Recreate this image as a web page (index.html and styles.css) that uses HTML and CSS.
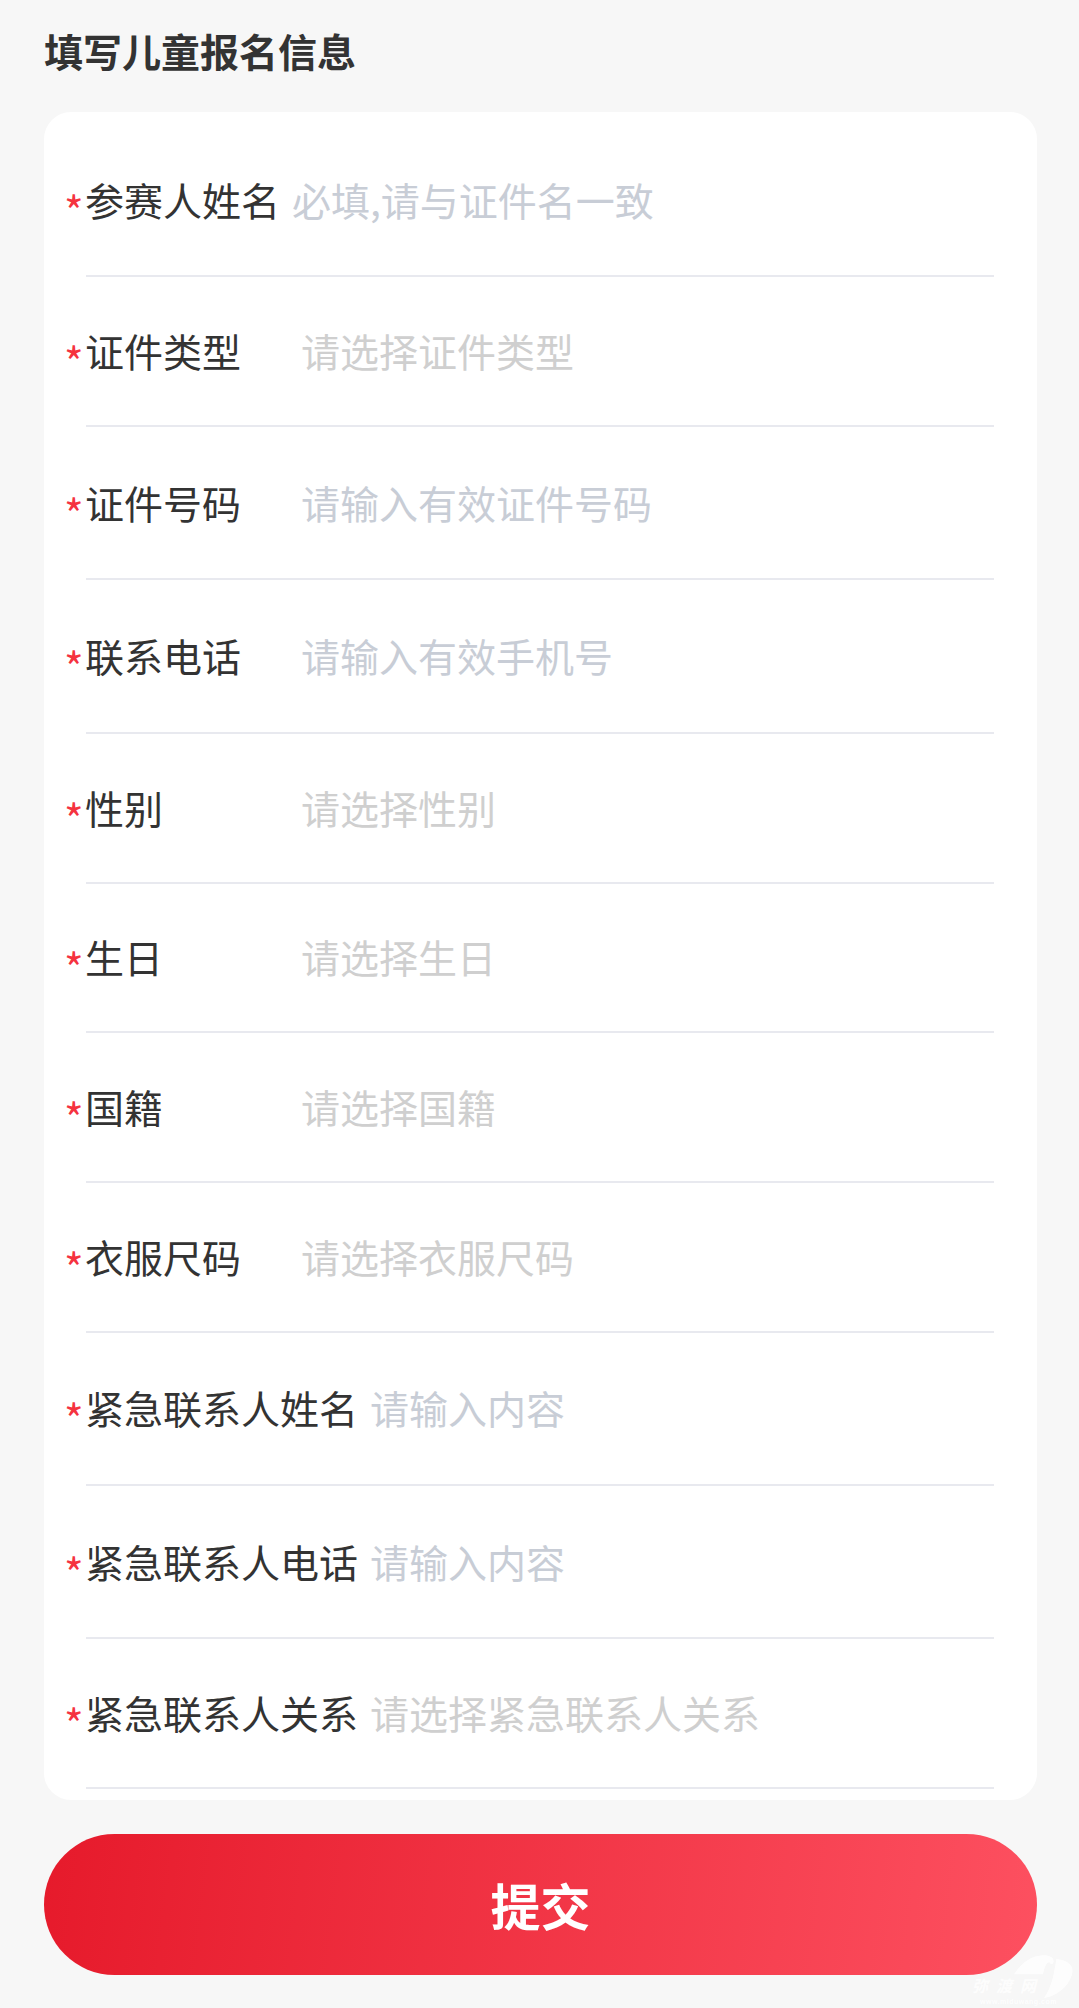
FILE: index.html
```html
<!DOCTYPE html>
<html lang="zh-CN">

<head>
    <meta charset="UTF-8">
    <meta name="viewport" content="width=device-width, initial-scale=1.0">
    <title>填写儿童报名信息</title>
    <link rel="stylesheet" href="styles.css">
</head>

<body>

    <h1 class="page-title">填写儿童报名信息</h1>

    <form class="form-card">
        <div class="form-row row-first">
            <label class="form-label"><span class="star">*</span>参赛人姓名</label>
            <span class="hint hint-input">必填,请与证件名一致</span>
        </div>
        <div class="form-row row-select">
            <label class="form-label"><span class="star">*</span>证件类型</label>
            <span class="hint hint-select">请选择证件类型</span>
        </div>
        <div class="form-row row-input">
            <label class="form-label"><span class="star">*</span>证件号码</label>
            <span class="hint hint-input">请输入有效证件号码</span>
        </div>
        <div class="form-row row-input">
            <label class="form-label"><span class="star">*</span>联系电话</label>
            <span class="hint hint-input">请输入有效手机号</span>
        </div>
        <div class="form-row row-select">
            <label class="form-label"><span class="star">*</span>性别</label>
            <span class="hint hint-select">请选择性别</span>
        </div>
        <div class="form-row row-select">
            <label class="form-label"><span class="star">*</span>生日</label>
            <span class="hint hint-select">请选择生日</span>
        </div>
        <div class="form-row row-select">
            <label class="form-label"><span class="star">*</span>国籍</label>
            <span class="hint hint-select">请选择国籍</span>
        </div>
        <div class="form-row row-select">
            <label class="form-label"><span class="star">*</span>衣服尺码</label>
            <span class="hint hint-select">请选择衣服尺码</span>
        </div>
        <div class="form-row row-input">
            <label class="form-label"><span class="star">*</span>紧急联系人姓名</label>
            <span class="hint hint-input">请输入内容</span>
        </div>
        <div class="form-row row-input">
            <label class="form-label"><span class="star">*</span>紧急联系人电话</label>
            <span class="hint hint-input">请输入内容</span>
        </div>
        <div class="form-row row-select">
            <label class="form-label"><span class="star">*</span>紧急联系人关系</label>
            <span class="hint hint-select">请选择紧急联系人关系</span>
        </div>
    </form>

    <button class="submit-btn" type="button">提交</button>

    <!-- watermark over the bottom right corner -->
    <div class="watermark">
        <svg class="watermark-logo" width="60" height="45" viewBox="165 54 180 135">
            <path d="M165 112 C185 80 215 56 252 55 C272 54 285 62 284 74 C283 83 272 83 272 76 C262 76 258 88 252 112 Z" fill="#fff" />
            <path d="M292 66 C325 68 345 85 340 108 C333 145 295 178 255 183 C268 165 280 135 285 105 C288 90 290 78 292 66 Z" fill="#fff" />
        </svg>
        <span class="watermark-name">弥渡网</span>
        <span class="watermark-url">www.miduwang.com</span>
    </div>

</body>

</html>
```

FILE: styles.css
```css
/* General Styles */

html,
body {
    height: 100%;
}

body {
    margin: 0;
    padding: 0;
    position: relative;
    overflow: hidden;
    background-color: #f7f7f7;
    font-family: "Noto Sans CJK SC", "Noto Sans", sans-serif;
}

.page-title {
    margin: 0;
    height: 112px;
    padding: 0 0 13px 44px;
    box-sizing: border-box;
    display: flex;
    align-items: center;
    font-size: 39px;
    font-weight: 700;
    color: #333;
}

/* Form card */

.form-card {
    margin: 0 42px 0 44px;
    height: 1688px;
    box-sizing: border-box;
    padding: 12px 43px 0 42px;
    background-color: #fff;
    border-radius: 27px;
    overflow: hidden;
}

.form-row {
    display: flex;
    align-items: center;
    box-sizing: border-box;
    padding-bottom: 2px;
    border-bottom: 2px solid #e8e9ef;
    font-size: 39px;
}

.row-first,
.row-input {
    height: 153.4px;
}

.row-select {
    height: 149.7px;
}

.form-label {
    display: flex;
    align-items: center;
    min-width: 204px;
    margin-left: -1px;
    margin-right: 12px;
    color: #333;
    white-space: nowrap;
}

.row-first .form-label {
    min-width: 0;
}

/* star hangs to the left of the divider line */
.star {
    width: 21px;
    height: 30px;
    margin-left: -21px;
    color: #f5333f;
    font-size: 42px;
    line-height: 51px;
}

.hint {
    white-space: nowrap;
}

.hint-input {
    color: #c8cdd6;
}

.hint-select {
    color: #cfcfcf;
}

/* Submit button */

.submit-btn {
    display: block;
    width: 993px;
    height: 141px;
    margin: 34px 0 0 44px;
    padding: 0 0 2px;
    border: none;
    border-radius: 71px;
    background: linear-gradient(97deg, #e61a2b 0%, #fd5060 100%);
    color: #fff;
    font-family: inherit;
    font-size: 50px;
    font-weight: 700;
}

/* Watermark */

.watermark {
    position: absolute;
    right: 4px;
    bottom: 5px;
    width: 103px;
    height: 48px;
    opacity: 0.85;
    color: #fff;
}

.watermark-logo {
    position: absolute;
    right: 1px;
    top: 0;
}

.watermark-name {
    position: absolute;
    left: 0;
    top: 23px;
    font-size: 16px;
    line-height: 14px;
    letter-spacing: 8px;
    font-style: italic;
    font-weight: 700;
}

.watermark-url {
    position: absolute;
    left: 8px;
    bottom: -3px;
    font-family: "Liberation Sans", sans-serif;
    font-size: 7px;
    font-weight: 700;
    line-height: 8px;
    letter-spacing: 0.5px;
}
```
